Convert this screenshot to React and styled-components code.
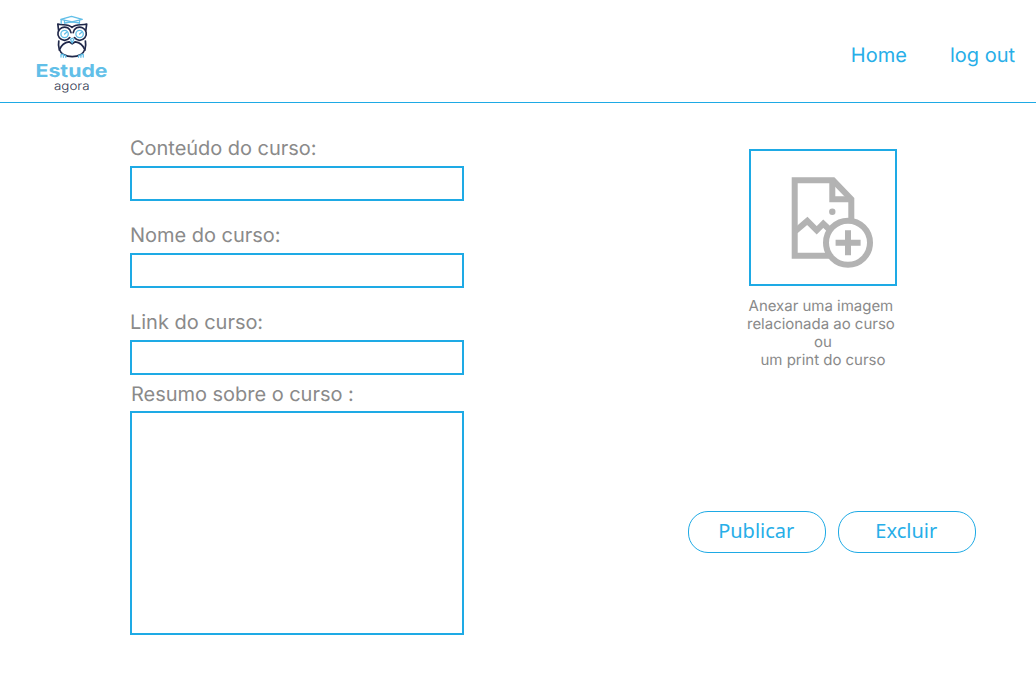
import React from "react";
import styled, { createGlobalStyle } from "styled-components";

const blue = "#1eaae5";

const GlobalStyle = createGlobalStyle`
  * { box-sizing: border-box; }
  body {
    margin: 0;
    background: #fff;
    font-family: Inter, "Liberation Sans", sans-serif;
    font-weight: 400;
    text-rendering: geometricPrecision;
  }
`;

const Page = styled.div`
  min-height: 681px;
`;

const Header = styled.header`
  display: flex;
  justify-content: space-between;
  height: 103px;
  padding: 12px 21px 0 32px;
  border-bottom: 1px solid ${blue};
`;

const Nav = styled.nav`
  display: flex;
  gap: 43px;
  padding-top: 31px;
`;

const NavLink = styled.a`
  color: #27aee8;
  font-size: 20px;
  line-height: 24px;
  text-decoration: none;
`;

const Main = styled.main`
  display: flex;
  justify-content: space-between;
  padding: 33px 60px 0 130px;
`;

const Form = styled.form`
  display: flex;
  flex-direction: column;
  width: 334px;
`;

const Field = styled.label`
  display: flex;
  flex-direction: column;
  gap: ${(p) => (p.$summary ? "5px" : "6px")};
  margin-top: ${(p) => (p.$summary ? "-15px" : "0")};
  margin-bottom: 22px;
`;

const LabelText = styled.span`
  color: #8a8a8a;
  font-size: 20px;
  line-height: 24px;
  letter-spacing: -0.03px;
  padding-left: ${(p) => p.$indent || 0}px;
`;

const Input = styled.input`
  height: 35px;
  padding: 0 8px;
  border: 2px solid ${blue};
  border-radius: 0;
  outline: none;
  font: inherit;
`;

const TextArea = styled.textarea`
  height: 224px;
  padding: 8px;
  border: 2px solid ${blue};
  border-radius: 0;
  outline: none;
  resize: none;
  font: inherit;
`;

const Side = styled.aside`
  display: flex;
  flex-direction: column;
  width: 288px;
  padding-top: 13px;
`;

const Upload = styled.div`
  display: flex;
  flex-direction: column;
  align-items: center;
  gap: 11px;
  width: 270px;
`;

const UploadBox = styled.button`
  display: block;
  width: 148px;
  height: 137px;
  padding: 0;
  border: 2px solid ${blue};
  background: #fff;

  svg { display: block; }
`;

const Caption = styled.p`
  margin: 0;
  color: #8a8a8a;
  font-size: 15px;
  line-height: 18px;
  letter-spacing: -0.02px;
  text-align: center;
`;

const Actions = styled.div`
  display: flex;
  gap: 12px;
  margin-top: 142px;
`;

const Button = styled.button`
  width: 138px;
  height: 42px;
  padding: 0 1.5px 2px 0;
  border: 1px solid ${blue};
  border-radius: 20px;
  background: #fff;
  color: #27aee8;
  font: 400 20px/24px "Noto Sans", "Open Sans", sans-serif;
`;

const Logo = () => (
  <svg width="80" height="84" viewBox="32 12 80 84" role="img" aria-label="Estude agora">
    <g fill="none" stroke="#20284a" strokeWidth="1.7" strokeLinecap="round" strokeLinejoin="round">
      <path d="M58.6 30.5 57.8 24 C62 25.6 68 23.5 72 27.4 C76 23.5 82 25.6 86.7 24 L85.8 30.5" />
      <path d="M69.8 37.6A6.6 6.6 0 1 1 71 32.6" />
      <path d="M74.4 37.6A6.6 6.6 0 1 0 73.2 32.6" />
      <path d="M58.8 41 C57.8 47 59 51.5 63.5 54.6 C68.5 57.4 76 57.4 80.8 54.6 C85.2 51.5 86.4 47 85.4 41" />
      <path d="M59.3 50 C61 45.8 64.3 42.2 69 41.8 L72.2 43.8 75.3 41.8 C80 42.2 83.3 45.8 85 50" />
    </g>
    <g fill="none" stroke="#62bfe8" strokeWidth="1.3" strokeLinecap="round" strokeLinejoin="round">
      <path d="M60.8 19.3 71.5 16.3 82.3 19.3 72 21.8Z" />
      <path d="M64.5 20.5V23.3 M79.5 20.5V23.3 M61.2 20V23.5 M65 23Q72 21.2 79.3 23" />
      <circle cx="64.6" cy="34" r="3.7" />
      <circle cx="79.6" cy="34" r="3.7" />
      <path d="M64.6 34 67 32 M79.6 34 82 32" />
      <path d="M70.5 39.2 72.2 38.2 73.9 39.2 72.2 43Z" />
      <path d="M61 57V54.8Q62.2 53.6 63.4 54.8V57.3 M63.4 55.5Q64.6 54.6 65.8 56V57.3 M78.5 57.3V56Q79.7 54.6 80.9 55.5V57.3 M80.9 55Q82.1 53.6 83.3 54.8V57" />
    </g>
    <text x="35.5" y="76.5" fill="#62bfe8" fontFamily="Inter, sans-serif" fontSize="18" fontWeight="700" textLength="72" lengthAdjust="spacingAndGlyphs">Estude</text>
    <text x="54" y="90" fill="#30364f" fontFamily="Inter, sans-serif" fontSize="11.8" fontWeight="300" textLength="35.5" lengthAdjust="spacingAndGlyphs">agora</text>
  </svg>
);

const AddImageIcon = () => (
  <svg width="144" height="133" viewBox="751 151 144 133" aria-hidden="true">
    <g fill="none" stroke="#b3b3b3" strokeWidth="6">
      <path d="M829 255.8H794.7V180.3H833.1L851.3 199.2V221" />
      <path d="M832.3 180V199.2H851.3" />
      <path d="M795.5 231 807.3 220.9 816.7 230.3 823.3 223.7 831 231" />
      <circle cx="848" cy="242.8" r="22" fill="#fff" />
      <path d="M835.6 242.8H860.6 M848 230.3V255.3" />
    </g>
    <circle cx="832.3" cy="211.7" r="3.2" fill="#b3b3b3" />
  </svg>
);

export default function App() {
  return (
    <Page>
      <GlobalStyle />
      <Header>
        <Logo />
        <Nav>
          <NavLink>Home</NavLink>
          <NavLink>log out</NavLink>
        </Nav>
      </Header>
      <Main>
        <Form>
          <Field><LabelText>Conteúdo do curso:</LabelText><Input /></Field>
          <Field><LabelText>Nome do curso:</LabelText><Input /></Field>
          <Field><LabelText>Link do curso:</LabelText><Input /></Field>
          <Field $summary>
            <LabelText $indent={1}>Resumo sobre o curso :</LabelText>
            <TextArea />
          </Field>
        </Form>
        <Side>
          <Upload>
            <UploadBox type="button" aria-label="Anexar imagem"><AddImageIcon /></UploadBox>
            <Caption>
              Anexar uma imagem&nbsp;<br />relacionada ao curso&nbsp;<br />ou<br />um print do curso
            </Caption>
          </Upload>
          <Actions>
            <Button type="button">Publicar</Button>
            <Button type="button">Excluir</Button>
          </Actions>
        </Side>
      </Main>
    </Page>
  );
}
